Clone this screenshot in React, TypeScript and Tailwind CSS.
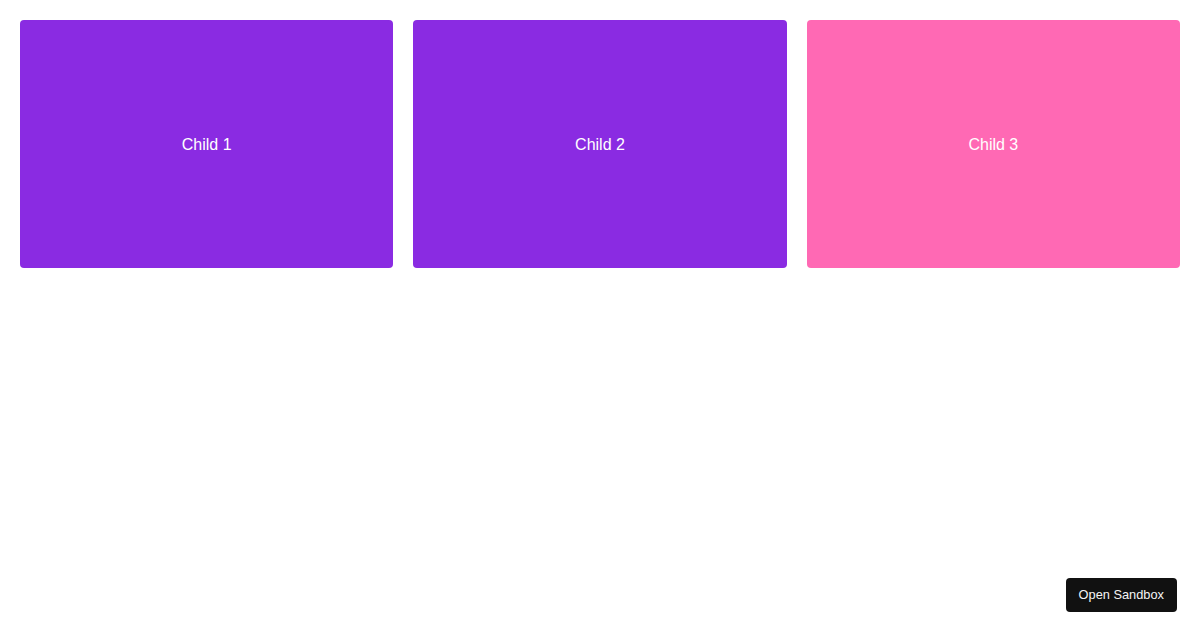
import React from 'react';

const items = [
  { label: 'Child 1', color: 'bg-[#8a2be2]' },
  { label: 'Child 2', color: 'bg-[#8a2be2]' },
  { label: 'Child 3', color: 'bg-[#ff69b4]' },
];

export default function App() {
  return (
    <div className="relative min-h-[630px] bg-white font-['Liberation_Sans',Arial,sans-serif]">
      <div className="grid grid-cols-3 gap-5 p-5">
        {items.map((item) => (
          <div
            key={item.label}
            className={`${item.color} h-[248px] rounded flex items-center justify-center pt-[2px] text-white text-base`}
          >
            {item.label}
          </div>
        ))}
      </div>
      <button className="fixed right-[23px] bottom-[18px] h-[34px] px-[13px] rounded bg-[#111111] text-[#f5f5f5] text-[12.8px]">
        Open Sandbox
      </button>
    </div>
  );
}
